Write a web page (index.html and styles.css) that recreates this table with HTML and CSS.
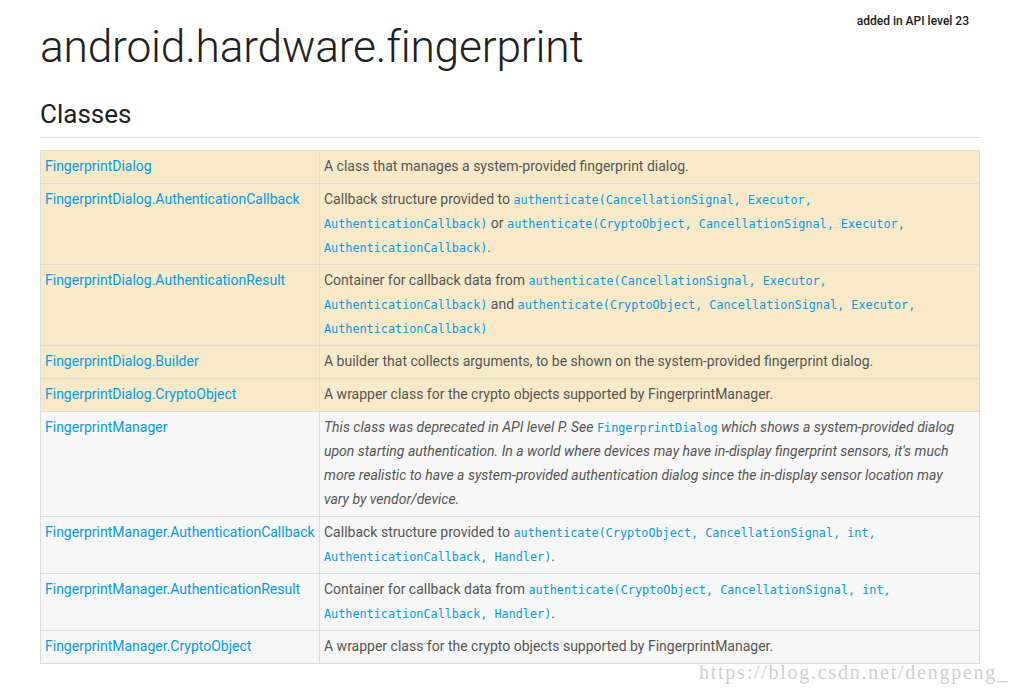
FILE: index.html
```html
<!DOCTYPE html>
<html>
<head>
<meta charset="utf-8">
<link rel="stylesheet" href="styles.css">
</head>
<body>
<div class="page">
  <div class="api-level">added in API level 23</div>
  <h1 class="title">android.hardware.fingerprint</h1>
  <h2 class="section">Classes</h2>
  <table class="classes">
    <tr class="new">
      <td class="name"><a>FingerprintDialog</a></td>
      <td class="desc">A class that manages a system-provided fingerprint dialog.</td>
    </tr>
    <tr class="new">
      <td class="name"><a>FingerprintDialog.AuthenticationCallback</a></td>
      <td class="desc">Callback structure provided to <code>authenticate(CancellationSignal, Executor, AuthenticationCallback)</code> or <code>authenticate(CryptoObject, CancellationSignal, Executor, AuthenticationCallback)</code>.</td>
    </tr>
    <tr class="new">
      <td class="name"><a>FingerprintDialog.AuthenticationResult</a></td>
      <td class="desc">Container for callback data from <code>authenticate(CancellationSignal, Executor, AuthenticationCallback)</code> and <code>authenticate(CryptoObject, CancellationSignal, Executor, AuthenticationCallback)</code></td>
    </tr>
    <tr class="new">
      <td class="name"><a>FingerprintDialog.Builder</a></td>
      <td class="desc">A builder that collects arguments, to be shown on the system-provided fingerprint dialog.</td>
    </tr>
    <tr class="new">
      <td class="name"><a>FingerprintDialog.CryptoObject</a></td>
      <td class="desc">A wrapper class for the crypto objects supported by FingerprintManager.</td>
    </tr>
    <tr class="old">
      <td class="name"><a>FingerprintManager</a></td>
      <td class="desc"><em>This class was deprecated in API level P. See <code>FingerprintDialog</code> which shows a system-provided dialog upon starting authentication. In a world where devices may have in-display fingerprint sensors, it's much more realistic to have a system-provided authentication dialog since the in-display sensor location may vary by vendor/device.</em></td>
    </tr>
    <tr class="old">
      <td class="name"><a>FingerprintManager.AuthenticationCallback</a></td>
      <td class="desc">Callback structure provided to <code>authenticate(CryptoObject, CancellationSignal, int, AuthenticationCallback, Handler)</code>.</td>
    </tr>
    <tr class="old">
      <td class="name"><a>FingerprintManager.AuthenticationResult</a></td>
      <td class="desc">Container for callback data from <code>authenticate(CryptoObject, CancellationSignal, int, AuthenticationCallback, Handler)</code>.</td>
    </tr>
    <tr class="old">
      <td class="name"><a>FingerprintManager.CryptoObject</a></td>
      <td class="desc">A wrapper class for the crypto objects supported by FingerprintManager.</td>
    </tr>
  </table>
  <div class="watermark">https://blog.csdn.net/dengpeng_</div>
</div>
</body>
</html>
```
FILE: styles.css
```css
html, body {
  margin: 0;
  padding: 0;
  background: #ffffff;
}
body {
  font-family: Roboto, "Noto Sans", sans-serif;
  color: #37474f;
}
.page {
  position: relative;
  width: 940px;
  height: 695px;
  padding: 0 40px;
}
.api-level {
  position: absolute;
  right: 51px;
  top: 14px;
  font-size: 12px;
  font-weight: 500;
  color: #202020;
}
.title {
  margin: 0;
  padding-top: 20px;
  font-size: 44.3px;
  font-weight: 300;
  line-height: 54px;
  color: #212121;
  letter-spacing: -0.2px;
}
.section {
  margin: 0;
  margin-top: 24px;
  font-size: 26px;
  font-weight: 400;
  line-height: 32px;
  color: #212121;
  padding-bottom: 7px;
  border-bottom: 1px solid #e0e0e0;
  margin-bottom: 12px;
}
.classes {
  width: 940px;
  border-collapse: collapse;
  font-size: 14px;
  line-height: 24px;
}
.classes td {
  border: 1px solid #dcdcdc;
  padding: 3px 4px 5px 4px;
  vertical-align: top;
}
.classes td.desc {
  padding-right: 10px;
}
.classes .name {
  width: 270px;
}
.classes tr.new td {
  background: #f8eac9;
}
.classes tr.old td {
  background: #f7f7f7;
}
.classes a {
  color: #039be5;
}
.desc {
  color: #555555;
}
.desc em {
  font-style: italic;
}
code {
  font-family: "DejaVu Sans Mono", monospace;
  font-size: 11.8px;
  font-style: normal;
  line-height: 1;
  color: #039be5;
}
.watermark {
  position: absolute;
  left: 699px;
  top: 661px;
  font-family: "Liberation Serif", "DejaVu Serif", serif;
  font-size: 20px;
  color: #d0d0d0;
  letter-spacing: 1.75px;
  white-space: nowrap;
}
```
